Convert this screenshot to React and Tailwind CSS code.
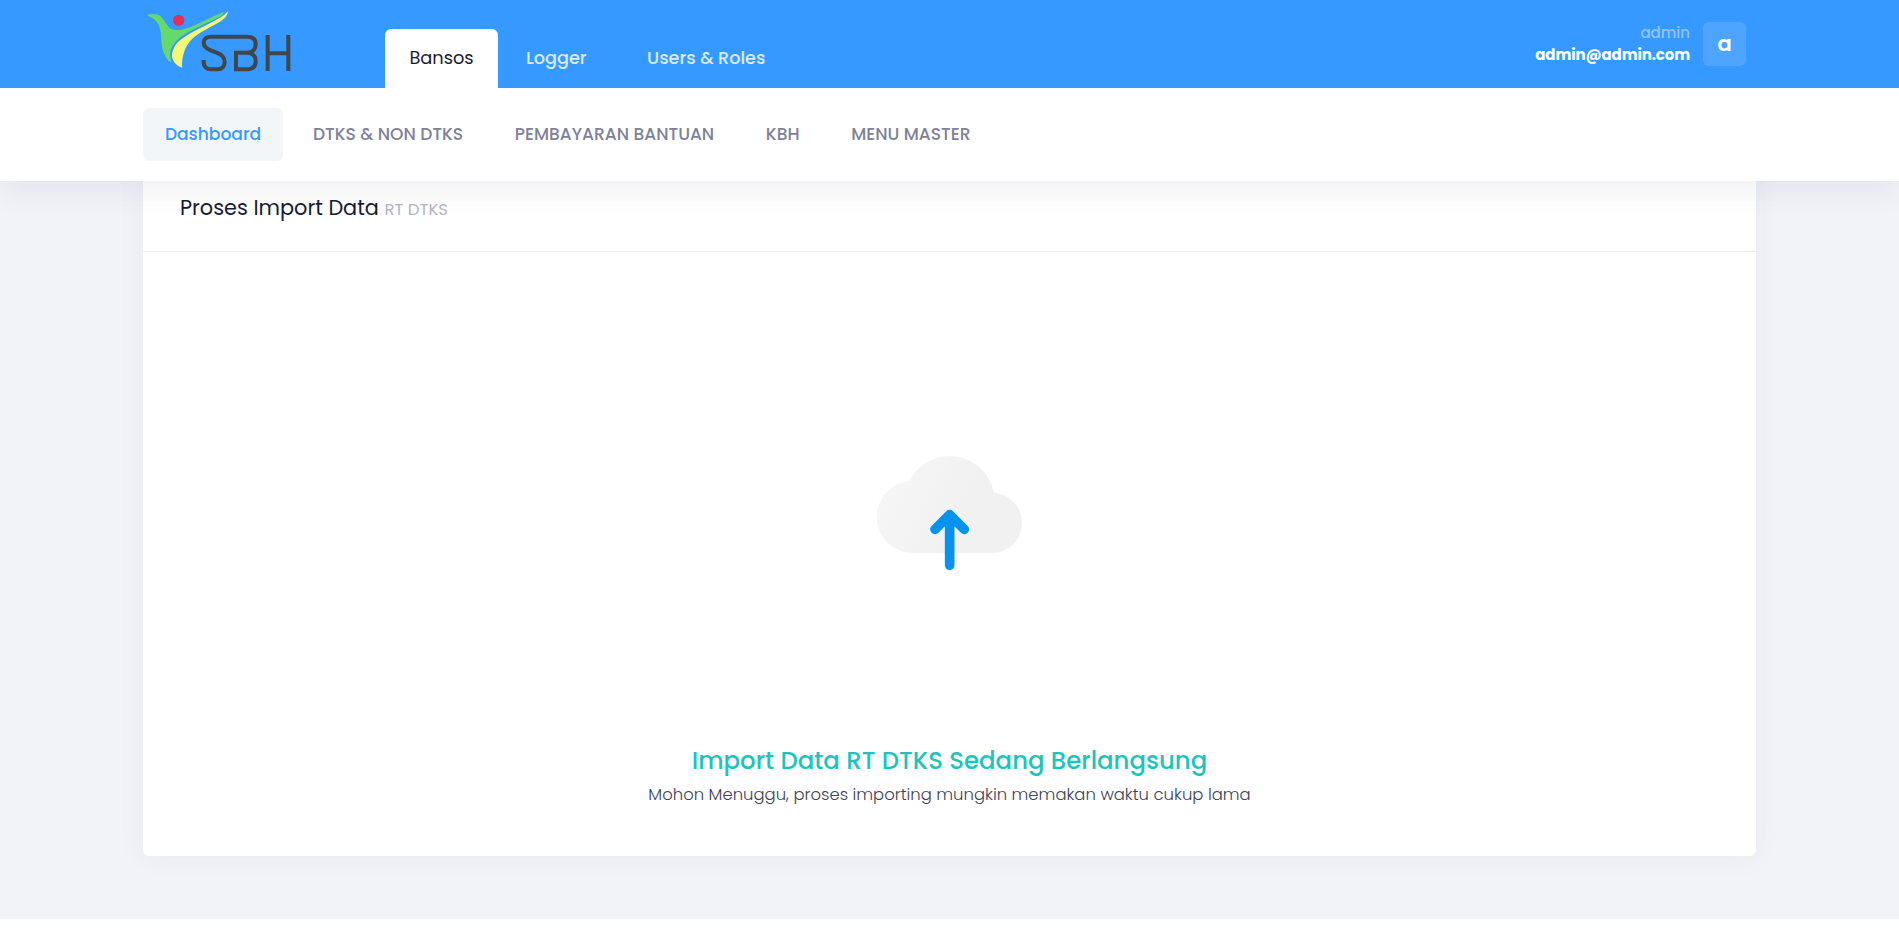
function Logo() {
  return (
    <svg viewBox="39 0 450 264" className="h-[88px] w-[150px] shrink-0" fill="none">
      <path d="M53 44C62 41 74 41 86 45C103 54 109 78 123 87C143 95 170 87 196 75C226 62 256 46 281 36C280 43 276 47 270 50C242 64 208 78 181 93C152 108 130 126 122 151C119 163 121 175 124 187C111 181 101 163 97 143C92 121 96 96 85 73C78 60 67 52 53 47Z" fill="#65d96c" />
      <path d="M294 34C293 45 285 57 270 65C243 81 207 96 184 119C164 140 155 170 156 203C144 200 133 190 128 178C122 160 131 137 150 121C174 101 207 86 237 71C260 60 280 50 294 34Z" fill="#f4f974" />
      <circle cx="146" cy="61" r="17" fill="#e23058" />
      <g stroke="#40464a" strokeWidth="12">
        <path d="M221 180V187C221 201 230 208 243 208H262C276 208 284 199 284 186C284 171 276 164 260 158L242 151C228 145 221 139 221 128C221 117 229 110 243 110H351C368 110 377 118 377 132C377 148 367 158 351 158H318V208H351C368 208 377 200 377 183C377 168 368 158 351 158" />
        <path d="M413 105V213M475 105V213M413 160H475" />
      </g>
    </svg>
  );
}

function UploadCloud() {
  return (
    <svg viewBox="0 0 600 480" className="h-[160px] w-[200px]" fill="none">
      <defs>
        <linearGradient id="cloud" x1="90" y1="170" x2="330" y2="280" gradientUnits="userSpaceOnUse">
          <stop stopColor="#f6f6f6" />
          <stop offset="1" stopColor="#f1f1f1" />
        </linearGradient>
      </defs>
      <path d="M188 369A108 108 0 0 1 80 261A108 108 0 0 1 178 153A135 135 0 0 1 299 78A135 135 0 0 1 432 188A90.500 90.500 0 0 1 516 278A90.500 90.500 0 0 1 426 369Z" fill="url(#cloud)" />
      <path d="M299 406V256M255 298L299 254L343 298" stroke="#0693ef" strokeWidth="29" strokeLinecap="round" strokeLinejoin="round" />
    </svg>
  );
}

const menu = ["DTKS & NON DTKS", "PEMBAYARAN BANTUAN", "KBH", "MENU MASTER"];

export default function App() {
  return (
    <div className="min-h-[946px] bg-white font-['Poppins','Inter',sans-serif]">
      <header className="relative z-10 bg-white shadow-[0_10px_30px_0_rgba(82,63,105,0.08)]">
        <div className="h-[88px] bg-[#3699ff] px-[143px]">
          <div className="flex h-full items-end">
            <Logo />
            <nav className="ml-[92px] flex h-[59px] items-center text-[17.6px] font-medium text-white/80">
              <a className="flex h-full w-[113px] items-center justify-center rounded-t-md bg-white pb-px text-[17.8px] font-normal text-[#181c32]">Bansos</a>
              <a className="ml-[28px]">Logger</a>
              <a className="ml-[60.500px]">Users &amp; Roles</a>
            </nav>
            <div className="ml-auto flex h-full items-center gap-[13px] pr-[10px]">
              <div className="flex flex-col items-end text-[15px] leading-[22px]">
                <span className="font-medium text-white/45">admin</span>
                <span className="font-bold tracking-[-0.12px] text-white">admin@admin.com</span>
              </div>
              <div className="flex h-11 w-[43px] items-center justify-center rounded-md bg-white/[0.12] text-[21px] font-semibold text-white">a</div>
            </div>
          </div>
        </div>
        <nav className="flex h-[93px] items-center gap-[8.300px] px-[143px] text-[17.1px] font-medium text-[#7e8299]">
          <a className="flex h-[53px] w-[140px] items-center justify-center rounded-md bg-[#f3f6f9] text-[#3699ff]">Dashboard</a>
          {menu.map((m) => (
            <a key={m} className="flex h-[53px] items-center px-[21.7px]">{m}</a>
          ))}
        </nav>
      </header>

      <main className="h-[738px] bg-[#f1f3f8] px-[143px]">
        <section className="-mt-[22px] inline-flex h-[697px] w-full flex-col rounded-md bg-white shadow-[0_0_30px_0_rgba(82,63,105,0.05)]">
          <div className="h-[93px] shrink-0 border-b border-[#ebedf3] px-[37px] pt-[35px]">
            <h3 className="text-[20.85px] leading-7 font-normal text-[#181c32]">
              Proses Import Data <small className="text-[16.5px] font-normal text-[#b5b5c3]">RT DTKS</small>
            </h3>
          </div>
          <div className="flex flex-col items-center pt-[178px]">
            <UploadCloud />
            <h2 className="mt-[153px] text-[24.4px] leading-9 font-medium text-[#1bc5bd]">Import Data RT DTKS Sedang Berlangsung</h2>
            <p className="mt-1 text-[16.45px] leading-6 font-light text-[#3f4254]">Mohon Menuggu, proses importing mungkin memakan waktu cukup lama</p>
          </div>
        </section>
      </main>
    </div>
  );
}
